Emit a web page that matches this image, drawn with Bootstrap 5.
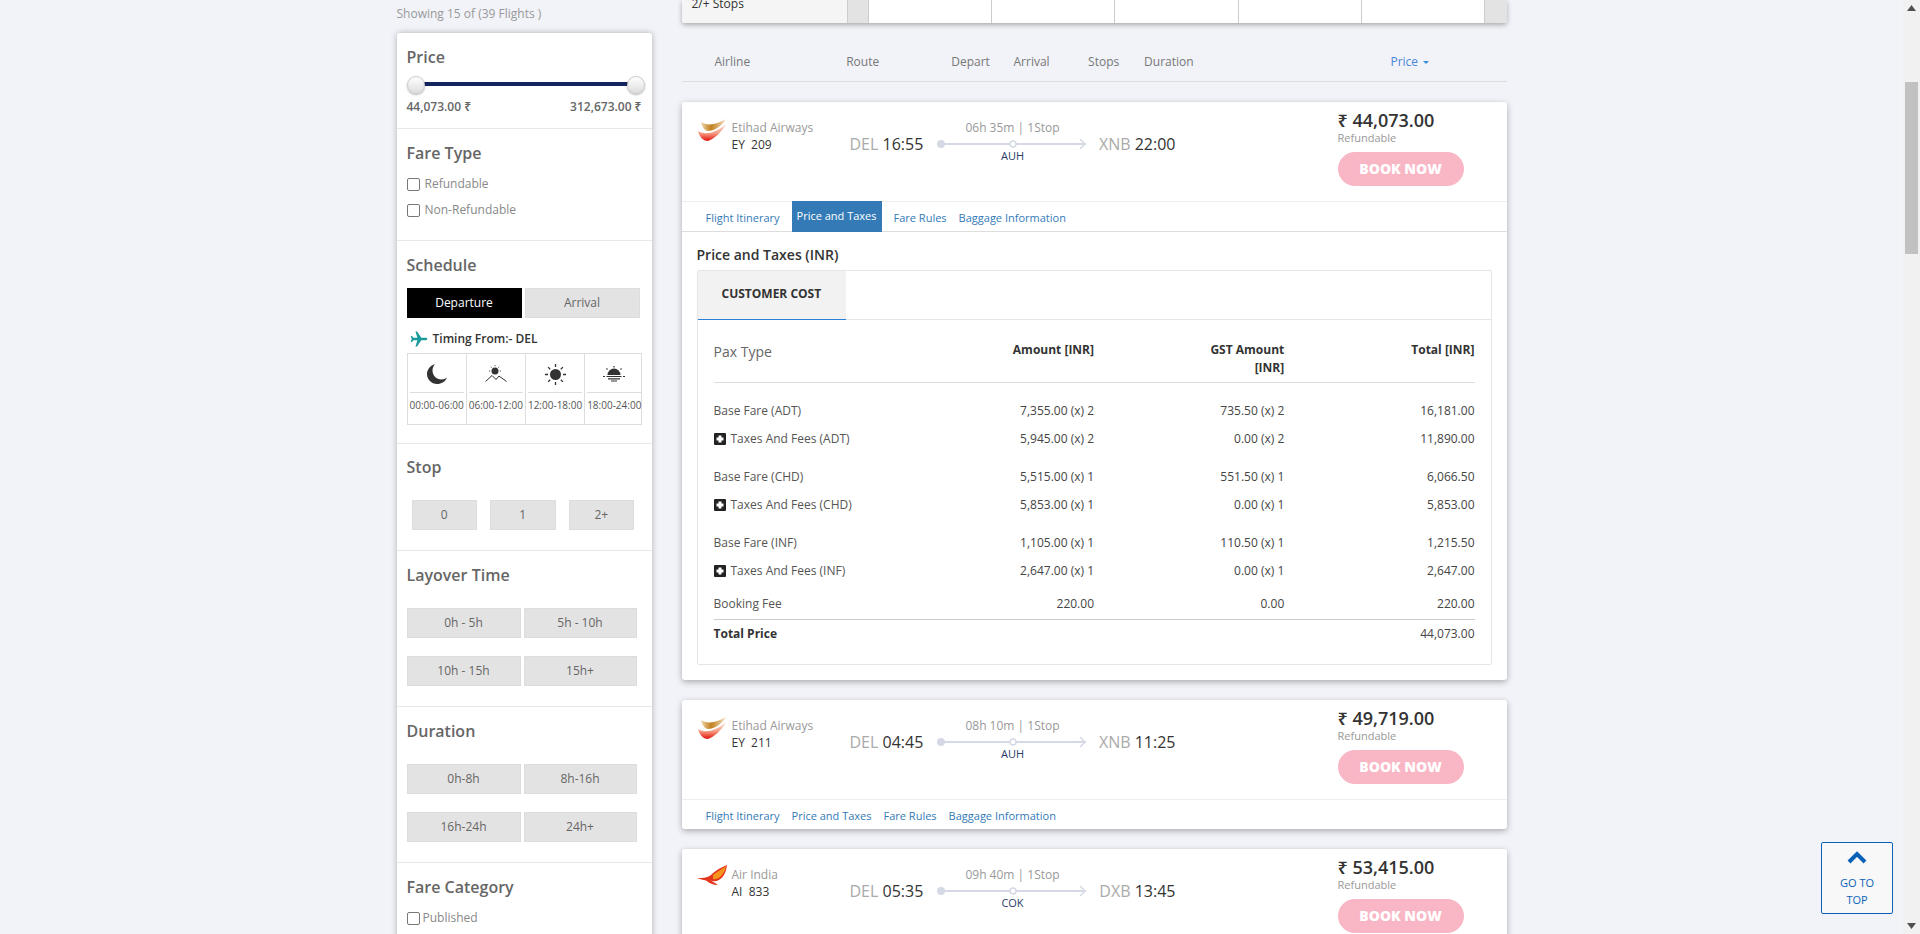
<!doctype html>
<html lang="en">
<head>
<meta charset="utf-8">
<meta name="viewport" content="width=device-width, initial-scale=1">
<title>Flight Results</title>
<link href="https://cdn.jsdelivr.net/npm/bootstrap@5.3.0/dist/css/bootstrap.min.css" rel="stylesheet">
<style>
  html, body { height: 934px; overflow: hidden; }
  body { background: #f1f3f8; font-family: "Open Sans", "Noto Sans", sans-serif; font-size: 12px; color: #333; line-height: 16px; }
  .scroll-track { width: 17px; height: 934px; background: #f1f1f1; flex: none; }
  .scroll-thumb { width: 13px; height: 172px; margin: 0 auto; background: #c1c1c1; }
  .scroll-arrow { height: 6px; margin: 5px 0; }
  .scroll-gap { height: 66px; }
  .scroll-rest { height: 664px; }
  .shell { width: 1110px; margin: 0 auto; gap: 30px; }
  .side-col { width: 255px; flex: none; }
  .main-col { width: 825px; flex: none; }
  .shown-line { height: 33px; padding-top: 6px; color: #999; }
  .filter-box { background: #fff; border-radius: 3px 3px 0 0; box-shadow: 0 0 6px rgba(0,0,0,.28); height: 1000px; }
  .fsec { padding: 13px 10px 20px; border-bottom: 1px solid #e8e8e8; }
  .fsec-tight { padding-top: 12px; }
  .fsec-price { padding-bottom: 13px; }
  .fsec-sched { padding-bottom: 18px; }
  .ftitle { font-size: 16px; font-weight: 600; line-height: 22px; color: #666; }
  .slide-wrap { height: 31px; position: relative; margin-right: -3px; }
  .slide-bar { position: absolute; left: 9px; right: 9px; top: 14px; height: 4px; background: #14245c; }
  .slide-knob { position: absolute; top: 8px; width: 18px; height: 18px; border-radius: 50%; background: linear-gradient(#fff, #ddd); border: 1px solid #ccc; box-shadow: 0 1px 2px rgba(0,0,0,.3); }
  .knob-a { left: 0; }
  .knob-b { right: 0; }
  .slide-vals { font-weight: 600; color: #666; }
  .check-line { height: 22px; margin-top: 4px; color: #888; gap: 5px; }
  .check-first { margin-top: 9px; }
  .fsec-fare { padding-bottom: 19px; }
  .check-line .form-check-input { width: 13px; height: 13px; margin: 0; border-color: #777; border-radius: 2px; }
  .check-pub { gap: 3px; margin-top: 9px; }
  .fbtn { height: 30px; padding: 0; font-size: 12px; line-height: 28px; border-radius: 0; background: #e3e3e3; border: 1px solid #ddd; color: #666; }
  .fbtn-dark { background: #000; border-color: #000; color: #fff; }
  .sched-row { margin-top: 12px; gap: 3px; }
  .sched-row .fbtn { width: 115px; }
  .stop-row { margin-top: 22px; padding-left: 5px; gap: 13px; }
  .stop-row .fbtn { width: 65.5px; }
  .dur-row { margin-top: 22px; gap: 3px; }
  .dur-row .fbtn { width: 114px; }
  .dur-row .fbtn + .fbtn { width: 113px; }
  .dur-row + .dur-row { margin-top: 18px; }
  .timing-line { margin-top: 12px; height: 18px; padding-left: 3px; gap: 5px; font-weight: 600; color: #333; }
  .time-grid { margin-top: 5px; height: 72px; width: 235px; border: 1px solid #ddd; }
  .time-cell { flex: 1 1 0; border-right: 1px solid #ddd; padding: 0 2px; text-align: center; font-size: 10px; color: #555; white-space: nowrap; }
  .time-cell:last-child { border-right: 0; }
  .time-icon { height: 39px; padding-top: 2px; border-bottom: 1px solid #ddd; margin-bottom: 4px; }
  .matrix-box { height: 23px; background: #fff; border-radius: 0 0 3px 3px; box-shadow: 0 2px 5px rgba(0,0,0,.3); overflow: hidden; }
  .matrix-head { width: 165px; background: #f5f5f5; padding: 0 10px; }
  .matrix-head span { display: block; margin-top: -4px; }
  .matrix-side { width: 21px; background: #e3e3e3; border-left: 1px solid #ccc; }
  .matrix-side-end { flex: 1 1 0; }
  .matrix-cell { width: 123.4px; border-left: 1px solid #ccc; }
  .sort-bar { margin-top: 31px; padding: 0 0 11px 33px; border-bottom: 1px solid #ddd; color: #777; }
  .sort-bar span:nth-child(1) { width: 131.7px; }
  .sort-bar span:nth-child(2) { width: 105px; }
  .sort-bar span:nth-child(3) { width: 62.3px; }
  .sort-bar span:nth-child(4) { width: 74.6px; }
  .sort-bar span:nth-child(5) { width: 56px; }
  .sort-bar span:nth-child(6) { width: 246.4px; }
  .sort-bar .sort-on { color: #4a84d6; }
  .sort-caret { display: inline-block; margin-left: 5px; vertical-align: 2px; border: 3.5px solid transparent; border-top-color: #3b8fd8; border-bottom: 0; }
  .fcard { margin-top: 20px; background: #fff; border: 0; border-radius: 3px; box-shadow: 0 2px 6px rgba(0,0,0,.3); }
  .fhead { height: 99px; padding: 0 0 0 15px; border-bottom: 0; }
  .air-logo { width: 35px; padding-top: 16px; flex: none; }
  .air-logo svg { display: block; }
  .air-info { width: 118px; padding-top: 18px; flex: none; }
  .air-name { color: #999; }
  .air-no { color: #333; margin-top: 1px; white-space: pre; }
  .dep-col { width: 87px; padding-top: 31px; flex: none; }
  .clock { font-size: 16px; line-height: 22px; color: #333; }
  .clock b { font-weight: 400; color: #aaa; }
  .route-col { width: 152px; padding-top: 18px; text-align: center; color: #999; flex: none; }
  .route-col svg { display: block; margin-top: 1px; }
  .route-code { font-size: 11px; line-height: 12px; color: #2b3a67; margin-top: -1px; }
  .arr-col { width: 87px; padding-top: 31px; text-align: right; flex: none; }
  .fare-col { margin-left: 162px; padding-top: 8px; width: 130px; flex: none; }
  .fare-amt { font-size: 18px; font-weight: 600; line-height: 21px; color: #333; white-space: nowrap; }
  .fare-note { font-size: 11px; line-height: 14px; color: #999; }
  .book-btn { display: block; width: 126px; height: 34px; margin-top: 7px; padding: 0; line-height: 34px; border: 0; border-radius: 17px; background: #f9b6c5; color: #fff; font-size: 14px; font-weight: 800; }
  .ftabs { height: 30px; padding-left: 24px; gap: 12px; border-top: 1px solid #eee; }
  .ftabs-open { border-bottom: 1px solid #ddd; height: 31px; }
  .ftabs .nav-link { padding: 3px 0 0; font-size: 11px; line-height: 26px; color: #337ab7; }
  .ftabs .nav-link.active { margin-top: -1px; padding: 0 5px; line-height: 29px; height: 31px; background: #337ab7; color: #fff; border-radius: 0; }
  .fdetail { padding: 14px 15px 15px; }
  .fdetail-title { font-size: 14px; font-weight: 600; line-height: 18px; color: #333; }
  .fare-box { margin-top: 6px; height: 395px; border: 1px solid #e5e5e5; border-radius: 2px; }
  .cost-tabs { height: 49px; border-bottom: 1px solid #e5e5e5; }
  .cost-tab { width: 148px; height: 49px; padding-left: 24px; background: #f2f2f2; border-bottom: 1px solid #2b7fd6; font-weight: 700; line-height: 46px; color: #333; }
  .fare-table { width: 761px; margin: 21px 0 0 16px; border-collapse: collapse; }
  .fare-table td, .fare-table th { padding: 0; text-align: right; vertical-align: middle; height: 28px; line-height: 18px; color: #444; }
  .fare-table th { vertical-align: top; height: 41px; font-weight: 700; color: #333; border-bottom: 1px solid #ddd; }
  .fare-table th:first-child { font-size: 14px; line-height: 22px; font-weight: 400; color: #666; }
  .fare-table td:first-child, .fare-table th:first-child { text-align: left; width: 190px; }
  .col-amt { width: 190px; }
  .fare-table td:first-child { color: #555; }
  .fare-table .row-top td { height: 43px; padding-top: 15px; }
  .fare-table .row-gap td { height: 38px; padding-top: 10px; }
  .fare-table .row-fee td { height: 34px; padding-top: 5px; border-bottom: 1px solid #ccc; }
  .fare-table .row-total td { height: 29px; }
  .fare-table .row-total td:first-child { font-weight: 700; color: #333; }
  .plus-ico { display: inline-block; vertical-align: -2px; margin-right: 5px; }
  .to-top { position: fixed; left: 1821px; top: 842px; width: 72px; height: 72px; border: 1px solid #0a62b8; border-radius: 2px; background: #f8f8f8; color: #0a62b8; text-align: center; font-size: 11px; line-height: 17px; padding-top: 8px; }
  .to-top svg { display: block; margin: 0 auto 10px; }
</style>
</head>
<body>
<div class="d-flex">
  <div class="flex-grow-1">
    <div class="shell d-flex">

      <!-- filters -->
      <div class="side-col">
        <div class="shown-line">Showing 15 of (39 Flights )</div>
        <div class="filter-box">
          <div class="fsec fsec-price">
            <div class="ftitle">Price</div>
            <div class="slide-wrap">
              <div class="slide-bar"></div>
              <div class="slide-knob knob-a"></div>
              <div class="slide-knob knob-b"></div>
            </div>
            <div class="slide-vals d-flex justify-content-between"><span>44,073.00 ₹</span><span>312,673.00 ₹</span></div>
          </div>

          <div class="fsec fsec-fare">
            <div class="ftitle">Fare Type</div>
            <div class="check-line check-first d-flex align-items-center"><input class="form-check-input" type="checkbox" id="fareRef"><label for="fareRef">Refundable</label></div>
            <div class="check-line d-flex align-items-center"><input class="form-check-input" type="checkbox" id="fareNon"><label for="fareNon">Non-Refundable</label></div>
          </div>

          <div class="fsec fsec-sched">
            <div class="ftitle">Schedule</div>
            <div class="sched-row d-flex">
              <button type="button" class="btn fbtn fbtn-dark">Departure</button>
              <button type="button" class="btn fbtn">Arrival</button>
            </div>
            <div class="timing-line d-flex align-items-center">
              <svg width="18" height="18" viewBox="0 0 24 24"><path fill="#1a9a9a" d="M23 12c0-1-1-1.6-2.2-1.6H15L9.500 2H7.300l2.600 8.400H4.600L2.700 8H1l1.300 4L1 16h1.700l1.900-2.400h5.300L7.300 22h2.200L15 13.600h5.800C22 13.600 23 13 23 12z"/></svg>
              <span>Timing From:- DEL</span>
            </div>
            <div class="time-grid d-flex">
              <div class="time-cell">
                <div class="time-icon d-flex align-items-center justify-content-center"><svg width="22" height="22" viewBox="0 0 22 22"><path fill="#333" d="M9 1C4.500 2.500 1 6.300 1 11c0 5.500 4.500 10 10 10 4.500 0 8.300-2.300 10-6.500-1.500 1.300-3.500 2-5.500 2C10.500 16.500 6.500 12.500 6.500 7.500 6.500 5.300 7.400 3 9 1z"/></svg></div>
                00:00-06:00
              </div>
              <div class="time-cell">
                <div class="time-icon d-flex align-items-center justify-content-center"><svg width="22" height="18" viewBox="0 0 22 18" fill="none" stroke="#333"><circle cx="10" cy="6" r="3.500" fill="#333" stroke="none"/><path stroke-width=".8" d="M10 0v1.200M4 6h1.200M14.800 6H16M5.800 1.800l.9.9M14.200 1.800l-.9.900"/><path stroke-width="1" d="M.5 16.500L7 10.500l4 4 3-3.500 7.500 5.500" fill="#fff"/></svg></div>
                06:00-12:00
              </div>
              <div class="time-cell">
                <div class="time-icon d-flex align-items-center justify-content-center"><svg width="21" height="21" viewBox="0 0 21 21"><circle cx="10.500" cy="10.500" r="5.500" fill="#333"/><path stroke="#333" stroke-width="1.300" d="M10.500 0v3M10.500 18v3M0 10.500h3M18 10.500h3M3.100 3.100l2.100 2.100M15.800 15.800l2.100 2.100M17.900 3.100l-2.100 2.100M5.200 15.800l-2.100 2.100"/></svg></div>
                12:00-18:00
              </div>
              <div class="time-cell">
                <div class="time-icon d-flex align-items-center justify-content-center"><svg width="22" height="16" viewBox="0 0 22 16"><path fill="#333" d="M4.500 9a6.500 6.500 0 0 1 13 0z"/><path stroke="#333" stroke-width="1.200" d="M11 0v1.500M3.500 2.500l1 1M18.500 2.500l-1 1M0 10.500h2M20 10.500h2M3.500 10.500h15M5 12.800h12M8 15h6"/></svg></div>
                18:00-24:00
              </div>
            </div>
          </div>

          <div class="fsec fsec-tight">
            <div class="ftitle">Stop</div>
            <div class="stop-row d-flex">
              <button type="button" class="btn fbtn">0</button>
              <button type="button" class="btn fbtn">1</button>
              <button type="button" class="btn fbtn">2+</button>
            </div>
          </div>

          <div class="fsec">
            <div class="ftitle">Layover Time</div>
            <div class="dur-row d-flex">
              <button type="button" class="btn fbtn">0h - 5h</button>
              <button type="button" class="btn fbtn">5h - 10h</button>
            </div>
            <div class="dur-row d-flex">
              <button type="button" class="btn fbtn">10h - 15h</button>
              <button type="button" class="btn fbtn">15h+</button>
            </div>
          </div>

          <div class="fsec">
            <div class="ftitle">Duration</div>
            <div class="dur-row d-flex">
              <button type="button" class="btn fbtn">0h-8h</button>
              <button type="button" class="btn fbtn">8h-16h</button>
            </div>
            <div class="dur-row d-flex">
              <button type="button" class="btn fbtn">16h-24h</button>
              <button type="button" class="btn fbtn">24h+</button>
            </div>
          </div>

          <div class="fsec">
            <div class="ftitle">Fare Category</div>
            <div class="check-line check-pub d-flex align-items-center"><input class="form-check-input" type="checkbox" id="farePub"><label for="farePub">Published</label></div>
          </div>
        </div>
      </div>

      <!-- results -->
      <div class="main-col">
        <div class="matrix-box d-flex">
          <div class="matrix-head"><span>2/+ Stops</span></div>
          <div class="matrix-side"></div>
          <div class="matrix-cell"></div>
          <div class="matrix-cell"></div>
          <div class="matrix-cell"></div>
          <div class="matrix-cell"></div>
          <div class="matrix-cell"></div>
          <div class="matrix-side matrix-side-end"></div>
        </div>

        <div class="sort-bar d-flex">
          <span>Airline</span><span>Route</span><span>Depart</span><span>Arrival</span><span>Stops</span><span>Duration</span>
          <span class="sort-on">Price<i class="sort-caret"></i></span>
        </div>

        <!-- EY 209, price tab open -->
        <div class="card fcard">
          <div class="fhead d-flex">
            <div class="air-logo">
              <svg width="30" height="24" viewBox="0 0 30 24"><defs><linearGradient id="eyGold" x1="0" y1="0" x2="1" y2="0"><stop offset="0" stop-color="#f0d9b0"/><stop offset=".4" stop-color="#c2801f"/><stop offset="1" stop-color="#f3e2c6"/></linearGradient><linearGradient id="eyRed" x1="0" y1="0" x2="0" y2="1"><stop offset="0" stop-color="#fbe3d6"/><stop offset=".55" stop-color="#f59a80"/><stop offset="1" stop-color="#e3120b"/></linearGradient></defs><path fill="url(#eyGold)" d="M4 4C10 8 19 7 29 1 24 9 17 13 11 13 8 13 5 9 4 4z"/><path fill="url(#eyRed)" d="M1 13C7 17 18 16 29 6 24 15 17 21 11 23 6 23 2 18 1 13z"/></svg>
            </div>
            <div class="air-info">
              <div class="air-name">Etihad Airways</div>
              <div class="air-no">EY  209</div>
            </div>
            <div class="dep-col clock"><b>DEL</b> 16:55</div>
            <div class="route-col">
              06h 35m | 1Stop
              <svg width="152" height="14" viewBox="0 0 152 14"><path stroke="#d5d8e5" stroke-width="2" d="M4 7h145"/><path fill="none" stroke="#d5d8e5" stroke-width="1.500" d="M143 2l5 5-5 5"/><circle cx="4" cy="7" r="4" fill="#d5d8e5"/><circle cx="76" cy="7" r="3" fill="#fff" stroke="#d5d8e5" stroke-width="1.500"/></svg>
              <div class="route-code">AUH</div>
            </div>
            <div class="arr-col clock"><b>XNB</b> 22:00</div>
            <div class="fare-col">
              <div class="fare-amt">₹ 44,073.00</div>
              <div class="fare-note">Refundable</div>
              <button type="button" class="btn book-btn">BOOK NOW</button>
            </div>
          </div>
          <nav class="nav ftabs ftabs-open">
            <a class="nav-link" href="#">Flight Itinerary</a>
            <a class="nav-link active" href="#">Price and Taxes</a>
            <a class="nav-link" href="#">Fare Rules</a>
            <a class="nav-link" href="#">Baggage Information</a>
          </nav>
          <div class="fdetail">
            <div class="fdetail-title">Price and Taxes (INR)</div>
            <div class="fare-box">
              <div class="cost-tabs"><div class="cost-tab">CUSTOMER COST</div></div>
              <table class="fare-table">
                <tr>
                  <th>Pax Type</th>
                  <th class="col-amt">Amount [INR]</th>
                  <th class="col-amt">GST Amount<br>[INR]</th>
                  <th class="col-amt">Total [INR]</th>
                </tr>
                <tr class="row-top"><td>Base Fare (ADT)</td><td>7,355.00 (x) 2</td><td>735.50 (x) 2</td><td>16,181.00</td></tr>
                <tr><td><svg class="plus-ico" width="12" height="12" viewBox="0 0 12 12"><rect width="12" height="12" rx="1" fill="#222"/><path stroke="#fff" stroke-width="3" d="M6 2.500v7M2.500 6h7"/></svg>Taxes And Fees (ADT)</td><td>5,945.00 (x) 2</td><td>0.00 (x) 2</td><td>11,890.00</td></tr>
                <tr class="row-gap"><td>Base Fare (CHD)</td><td>5,515.00 (x) 1</td><td>551.50 (x) 1</td><td>6,066.50</td></tr>
                <tr><td><svg class="plus-ico" width="12" height="12" viewBox="0 0 12 12"><rect width="12" height="12" rx="1" fill="#222"/><path stroke="#fff" stroke-width="3" d="M6 2.500v7M2.500 6h7"/></svg>Taxes And Fees (CHD)</td><td>5,853.00 (x) 1</td><td>0.00 (x) 1</td><td>5,853.00</td></tr>
                <tr class="row-gap"><td>Base Fare (INF)</td><td>1,105.00 (x) 1</td><td>110.50 (x) 1</td><td>1,215.50</td></tr>
                <tr><td><svg class="plus-ico" width="12" height="12" viewBox="0 0 12 12"><rect width="12" height="12" rx="1" fill="#222"/><path stroke="#fff" stroke-width="3" d="M6 2.500v7M2.500 6h7"/></svg>Taxes And Fees (INF)</td><td>2,647.00 (x) 1</td><td>0.00 (x) 1</td><td>2,647.00</td></tr>
                <tr class="row-fee"><td>Booking Fee</td><td>220.00</td><td>0.00</td><td>220.00</td></tr>
                <tr class="row-total"><td>Total Price</td><td></td><td></td><td>44,073.00</td></tr>
              </table>
            </div>
          </div>
        </div>

        <!-- EY 211 -->
        <div class="card fcard">
          <div class="fhead d-flex">
            <div class="air-logo">
              <svg width="30" height="24" viewBox="0 0 30 24"><path fill="url(#eyGold)" d="M4 4C10 8 19 7 29 1 24 9 17 13 11 13 8 13 5 9 4 4z"/><path fill="url(#eyRed)" d="M1 13C7 17 18 16 29 6 24 15 17 21 11 23 6 23 2 18 1 13z"/></svg>
            </div>
            <div class="air-info">
              <div class="air-name">Etihad Airways</div>
              <div class="air-no">EY  211</div>
            </div>
            <div class="dep-col clock"><b>DEL</b> 04:45</div>
            <div class="route-col">
              08h 10m | 1Stop
              <svg width="152" height="14" viewBox="0 0 152 14"><path stroke="#d5d8e5" stroke-width="2" d="M4 7h145"/><path fill="none" stroke="#d5d8e5" stroke-width="1.500" d="M143 2l5 5-5 5"/><circle cx="4" cy="7" r="4" fill="#d5d8e5"/><circle cx="76" cy="7" r="3" fill="#fff" stroke="#d5d8e5" stroke-width="1.500"/></svg>
              <div class="route-code">AUH</div>
            </div>
            <div class="arr-col clock"><b>XNB</b> 11:25</div>
            <div class="fare-col">
              <div class="fare-amt">₹ 49,719.00</div>
              <div class="fare-note">Refundable</div>
              <button type="button" class="btn book-btn">BOOK NOW</button>
            </div>
          </div>
          <nav class="nav ftabs">
            <a class="nav-link" href="#">Flight Itinerary</a>
            <a class="nav-link" href="#">Price and Taxes</a>
            <a class="nav-link" href="#">Fare Rules</a>
            <a class="nav-link" href="#">Baggage Information</a>
          </nav>
        </div>

        <!-- AI 833 -->
        <div class="card fcard">
          <div class="fhead d-flex">
            <div class="air-logo">
              <svg width="30" height="21" viewBox="0 0 30 21"><path fill="#e4341c" d="M0 13C8 13.500 12 12 15 9 19 5 25 2 30 0 29 7 27 12 22 15 19 16.500 16 16.500 14 15.500L21 20C16 20 12 18 9 15.500 6 15 3 14 0 13z"/><path fill="#f7941d" d="M16 10C20 7 25 3.500 29 1.500 28 6 26 10 22 13 20 14 18 14.500 16 14z"/></svg>
            </div>
            <div class="air-info">
              <div class="air-name">Air India</div>
              <div class="air-no">AI  833</div>
            </div>
            <div class="dep-col clock"><b>DEL</b> 05:35</div>
            <div class="route-col">
              09h 40m | 1Stop
              <svg width="152" height="14" viewBox="0 0 152 14"><path stroke="#d5d8e5" stroke-width="2" d="M4 7h145"/><path fill="none" stroke="#d5d8e5" stroke-width="1.500" d="M143 2l5 5-5 5"/><circle cx="4" cy="7" r="4" fill="#d5d8e5"/><circle cx="76" cy="7" r="3" fill="#fff" stroke="#d5d8e5" stroke-width="1.500"/></svg>
              <div class="route-code">COK</div>
            </div>
            <div class="arr-col clock"><b>DXB</b> 13:45</div>
            <div class="fare-col">
              <div class="fare-amt">₹ 53,415.00</div>
              <div class="fare-note">Refundable</div>
              <button type="button" class="btn book-btn">BOOK NOW</button>
            </div>
          </div>
        </div>
      </div>
    </div>
  </div>

  <!-- scrollbar -->
  <div class="scroll-track">
    <svg class="scroll-arrow d-block mx-auto" width="9" height="6" viewBox="0 0 9 6"><path fill="#505050" d="M4.500 0L9 6H0z"/></svg>
    <div class="scroll-gap"></div>
    <div class="scroll-thumb"></div>
    <div class="scroll-rest"></div>
    <svg class="scroll-arrow d-block mx-auto" width="9" height="6" viewBox="0 0 9 6"><path fill="#505050" d="M0 0h9L4.500 6z"/></svg>
  </div>
</div>

<a class="to-top text-decoration-none" href="#">
  <svg width="20" height="13" viewBox="0 0 20 13"><path fill="none" stroke="#0a62b8" stroke-width="4" d="M2 11l8-8 8 8"/></svg>
  GO TO<br>TOP
</a>

<script src="https://cdn.jsdelivr.net/npm/bootstrap@5.3.0/dist/js/bootstrap.bundle.min.js"></script>
</body>
</html>
